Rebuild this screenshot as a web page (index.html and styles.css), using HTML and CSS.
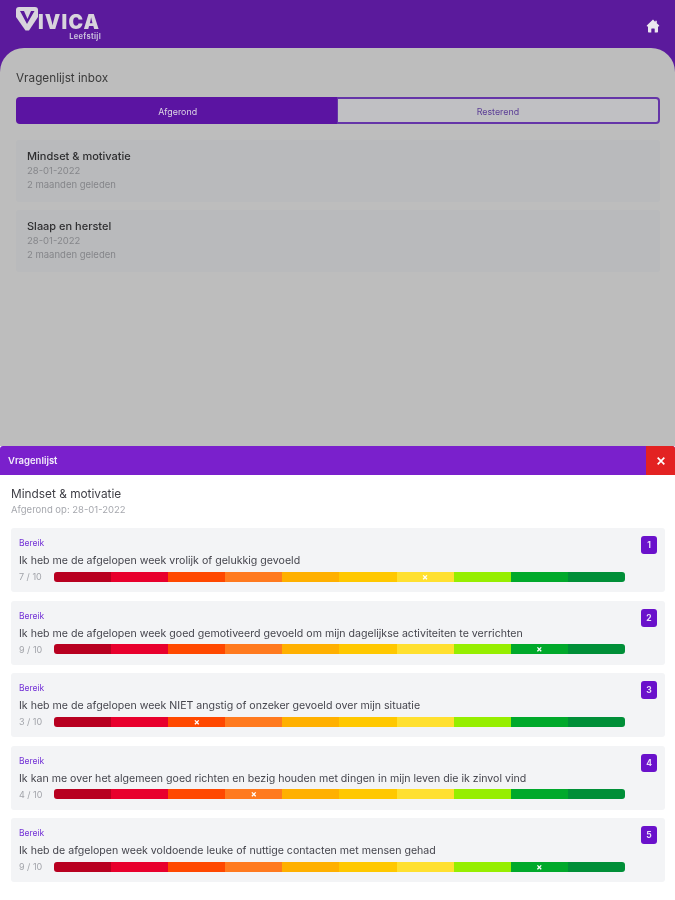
FILE: index.html
```html
<!DOCTYPE html>
<html lang="nl">
<head>
<meta charset="utf-8">
<title>Vragenlijst inbox</title>
<link rel="stylesheet" href="styles.css">
</head>
<body>
<div class="app">
  <header class="topbar">
    <div class="logo">
      <div class="logo-main">
        <svg class="logo-v" viewBox="0 0 22 24" width="22" height="24" aria-hidden="true"><path d="M0 3q0-3 3-3h16q3 0 3 3v7L13 23.500H9.500L0 10z" fill="#d8d4dc"/><path d="M4 4h4l3.500 8L15 4h3.500L11 17z" fill="#5b1a9c"/></svg>
        <span class="logo-word">IVICA</span>
      </div>
      <div class="logo-sub">Leefstijl</div>
    </div>
    <svg class="home" viewBox="0 0 14 14" width="14" height="14" aria-hidden="true"><path d="M7 .5 1 6.300q-.8.900.2 1.200H2v5.300q0 .7.700.7h2.600V10q0-.5.500-.5h2.400q.5 0 .5.500v3.500h2.600q.7 0 .7-.7V7.500h.8q1-.3.2-1.200L10.800 4.300V1.800H9.300V3z" fill="#ebe7ef"/></svg>
  </header>
  <main class="inbox">
    <h1 class="inbox-title">Vragenlijst inbox</h1>
    <div class="tabs">
      <div class="tab tab-on">Afgerond</div>
      <div class="tab tab-off">Resterend</div>
    </div>
    <div class="inbox-list">
      <div class="inbox-item">
        <div class="item-name">Mindset &amp; motivatie</div>
        <div class="item-meta">28-01-2022</div>
        <div class="item-meta">2 maanden geleden</div>
      </div>
      <div class="inbox-item">
        <div class="item-name">Slaap en herstel</div>
        <div class="item-meta">28-01-2022</div>
        <div class="item-meta">2 maanden geleden</div>
      </div>
    </div>
  </main>
  <section class="sheet">
    <div class="sheet-bar">
      <div class="sheet-title">Vragenlijst</div>
      <div class="sheet-close"><svg viewBox="0 0 12 12" width="10" height="10" aria-hidden="true"><path d="M2 2l8 8M10 2l-8 8" stroke="#fff" stroke-width="2" fill="none"/></svg></div>
    </div>
    <div class="sheet-body">
      <div class="sheet-name">Mindset &amp; motivatie</div>
      <div class="sheet-date">Afgerond op: 28-01-2022</div>
      <div class="questions">
        <article class="q">
          <div class="q-main">
            <div class="q-label">Bereik</div>
            <div class="q-text">Ik heb me de afgelopen week vrolijk of gelukkig gevoeld</div>
            <div class="q-row"><span class="q-score">7 / 10</span><div class="scale"><i class="s1"></i><i class="s2"></i><i class="s3"></i><i class="s4"></i><i class="s5"></i><i class="s6"></i><i class="s7">×</i><i class="s8"></i><i class="s9"></i><i class="s10"></i></div></div>
          </div>
          <div class="q-num">1</div>
        </article>
        <article class="q">
          <div class="q-main">
            <div class="q-label">Bereik</div>
            <div class="q-text">Ik heb me de afgelopen week goed gemotiveerd gevoeld om mijn dagelijkse activiteiten te verrichten</div>
            <div class="q-row"><span class="q-score">9 / 10</span><div class="scale"><i class="s1"></i><i class="s2"></i><i class="s3"></i><i class="s4"></i><i class="s5"></i><i class="s6"></i><i class="s7"></i><i class="s8"></i><i class="s9">×</i><i class="s10"></i></div></div>
          </div>
          <div class="q-num">2</div>
        </article>
        <article class="q">
          <div class="q-main">
            <div class="q-label">Bereik</div>
            <div class="q-text">Ik heb me de afgelopen week NIET angstig of onzeker gevoeld over mijn situatie</div>
            <div class="q-row"><span class="q-score">3 / 10</span><div class="scale"><i class="s1"></i><i class="s2"></i><i class="s3">×</i><i class="s4"></i><i class="s5"></i><i class="s6"></i><i class="s7"></i><i class="s8"></i><i class="s9"></i><i class="s10"></i></div></div>
          </div>
          <div class="q-num">3</div>
        </article>
        <article class="q">
          <div class="q-main">
            <div class="q-label">Bereik</div>
            <div class="q-text">Ik kan me over het algemeen goed richten en bezig houden met dingen in mijn leven die ik zinvol vind</div>
            <div class="q-row"><span class="q-score">4 / 10</span><div class="scale"><i class="s1"></i><i class="s2"></i><i class="s3"></i><i class="s4">×</i><i class="s5"></i><i class="s6"></i><i class="s7"></i><i class="s8"></i><i class="s9"></i><i class="s10"></i></div></div>
          </div>
          <div class="q-num">4</div>
        </article>
        <article class="q">
          <div class="q-main">
            <div class="q-label">Bereik</div>
            <div class="q-text">Ik heb de afgelopen week voldoende leuke of nuttige contacten met mensen gehad</div>
            <div class="q-row"><span class="q-score">9 / 10</span><div class="scale"><i class="s1"></i><i class="s2"></i><i class="s3"></i><i class="s4"></i><i class="s5"></i><i class="s6"></i><i class="s7"></i><i class="s8"></i><i class="s9">×</i><i class="s10"></i></div></div>
          </div>
          <div class="q-num">5</div>
        </article>
      </div>
    </div>
  </section>
</div>
</body>
</html>
```

FILE: styles.css
```css
* { box-sizing: border-box; }
html, body { margin: 0; padding: 0; }
body { font-family: Inter, "Noto Sans", sans-serif; background: #fff; }
.app { position: relative; width: 675px; height: 900px; overflow: hidden; background: #5b1a9c; filter: blur(0.6px); }

.topbar { height: 48px; display: flex; justify-content: space-between; padding: 8px 16px 0 16px; }
.logo { color: #d8d4dc; width: 85px; }
.logo-main { display: flex; align-items: flex-start; height: 23px; gap: 0; }
.logo-v { flex: none; margin-top: -1px; }
.logo-word { font-weight: 900; font-size: 19.500px; line-height: 16px; letter-spacing: 1.2px; height: 16px; margin-top: 6px; }
.logo-sub { font-size: 7.500px; line-height: 9px; text-align: right; font-weight: 700; margin-top: 1px; color: #c9bfdc; letter-spacing: 0.3px; }
.home { margin-top: 11px; margin-right: -1px; }

.inbox { height: 852px; background: #bdbdbd; border-radius: 24px 24px 0 0; padding: 22px 15.500px 0 16px; }
.inbox-title { margin: 0; font-size: 11.750px; line-height: 16px; font-weight: 400; color: #3a3a3a; }
.tabs { display: flex; margin-top: 11px; height: 27px; }
.tab { flex: 1 1 0; display: flex; align-items: center; justify-content: center; font-size: 8.900px; padding-top: 1px; }
.tab-on { background: #5b14a2; color: #dcd6e4; border-radius: 4px 0 0 4px; padding-left: 2px; }
.tab-off { background: #c0c0c3; color: #5b3d96; border: 2px solid #6535a8; border-left: 1px solid #6535a8; border-radius: 0 4px 4px 0; }
.inbox-list { display: flex; flex-direction: column; gap: 8px; margin-top: 15.500px; }
.inbox-item { height: 62px; background: #b9babc; border-radius: 3px; padding: 9px 11px 0; }
.item-name { font-size: 11px; line-height: 15px; font-weight: 500; color: #2e2e30; }
.item-meta { font-size: 9.500px; line-height: 14px; color: #85868a; }

.sheet { position: absolute; left: 0; right: 0; top: 446px; bottom: 0; background: #fff; display: flex; flex-direction: column; }
.sheet-bar { flex: none; height: 29px; display: flex; justify-content: space-between; align-items: stretch; background: #7a20cc; border-radius: 3px 3px 0 0; }
.sheet-title { align-self: center; padding-left: 8px; color: #f2ecfa; font-size: 9.500px; font-weight: 600; }
.sheet-close { width: 29px; display: flex; align-items: center; justify-content: center; background: #e32222; border-radius: 0 3px 0 0; }
.sheet-body { padding: 11px 10px 0 11px; }
.sheet-name { font-size: 11.850px; line-height: 16px; color: #3f3f46; }
.sheet-date { font-size: 9.500px; line-height: 12px; margin-top: 2px; color: #a6a8ae; }
.questions { display: flex; flex-direction: column; gap: 8.500px; margin-top: 12px; }
.q { height: 64px; background: #f3f4f6; border-radius: 3px; display: flex; padding: 9px 8px 0 8px; }
.q-main { flex: 1; min-width: 0; }
.q-label { font-size: 8.500px; line-height: 12px; color: #7433d6; }
.q-text { font-size: 10.600px; line-height: 14px; margin-top: 5px; color: #45454d; white-space: nowrap; }
.q-row { display: flex; align-items: center; gap: 0; margin-top: 3px; }
.q-score { width: 35px; font-size: 9px; color: #a2a4aa; }
.scale { width: 571px; height: 10px; display: flex; border-radius: 3px; overflow: hidden; }
.scale i { flex: 1 1 0; display: flex; align-items: center; justify-content: center; color: #fff; font-style: normal; font-size: 9px; font-weight: 700; line-height: 10px; }
.s1 { background: #b80020; }
.s2 { background: #e8002d; }
.s3 { background: #ff4800; }
.s4 { background: #ff7a1f; }
.s5 { background: #ffb000; }
.s6 { background: #ffc800; }
.s7 { background: #ffe030; }
.s8 { background: #96ee00; }
.s9 { background: #00a92b; }
.s10 { background: #008f38; }
.q-num { flex: none; width: 16px; height: 18px; margin-top: -1px; margin-left: -33px; position: relative; background: #6a11cb; color: #e8dcf8; border-radius: 3px; font-size: 8.500px; font-weight: 700; display: flex; align-items: center; justify-content: center; }
```
